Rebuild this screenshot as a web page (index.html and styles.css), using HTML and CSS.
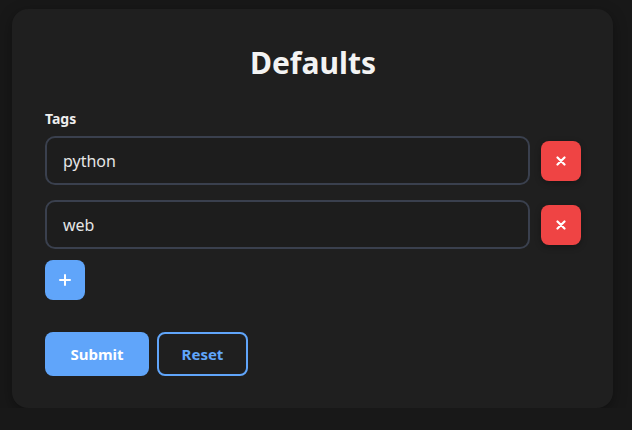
FILE: index.html
```html
<!DOCTYPE html>
<html>
<head>
<meta charset="utf-8">
<link rel="stylesheet" href="styles.css">
</head>
<body>
<div class="card">
  <h1 class="title">Defaults</h1>
  <div class="field-label">Tags</div>
  <div class="rows">
    <div class="row">
      <div class="input">python</div>
      <button class="del" aria-label="remove"><svg width="10" height="10" viewBox="0 0 10 10"><path d="M1.5 1.5 L8.5 8.5 M8.5 1.5 L1.5 8.5" stroke="#fff" stroke-width="2.2" stroke-linecap="round"/></svg></button>
    </div>
    <div class="row">
      <div class="input">web</div>
      <button class="del" aria-label="remove"><svg width="10" height="10" viewBox="0 0 10 10"><path d="M1.5 1.5 L8.5 8.5 M8.5 1.5 L1.5 8.5" stroke="#fff" stroke-width="2.2" stroke-linecap="round"/></svg></button>
    </div>
  </div>
  <button class="add" aria-label="add"><svg width="12" height="12" viewBox="0 0 12 12"><path d="M6 1 V11 M1 6 H11" stroke="#fff" stroke-width="2" stroke-linecap="round"/></svg></button>
  <div class="actions">
    <button class="btn primary">Submit</button>
    <button class="btn outline">Reset</button>
  </div>
</div>
</body>
</html>
```
FILE: styles.css
```css
html, body {
  margin: 0;
  padding: 0;
  background: #181818;
}
body {
  padding: 9px 19px 0 12px;
  font-family: "Segoe UI", "Noto Sans", sans-serif;
  color: #f0f0f0;
}
.card {
  width: 536px;
  background: #1f1f1f;
  border-radius: 16px;
  padding: 32px 32px 32px 33px;
  box-shadow: 0 4px 14px rgba(0,0,0,0.35);
}
.title {
  margin: 4px 0 0 0;
  text-align: center;
  font-size: 30px;
  line-height: 36px;
  font-weight: 700;
  color: #f3f3f3;
}
.field-label {
  margin-top: 28px;
  font-size: 14px;
  line-height: 20px;
  font-weight: 700;
  color: #eeeeee;
}
.rows {
  margin-top: 7px;
  display: flex;
  flex-direction: column;
  gap: 15px;
}
.row {
  display: flex;
  align-items: center;
  gap: 11px;
}
.input {
  flex: 1;
  box-sizing: border-box;
  height: 49px;
  border: 2px solid #3a404e;
  border-radius: 10px;
  padding: 0 16px;
  display: flex;
  align-items: center;
  font-size: 16px;
  color: #e6e6e6;
  background: #1d1d1d;
}
.del {
  width: 40px;
  height: 40px;
  border: none;
  border-radius: 8px;
  background: #ef4444;
  display: flex;
  align-items: center;
  justify-content: center;
  padding: 0;
  box-shadow: 0 2px 6px rgba(0,0,0,0.3);
}
.add {
  margin-top: 11px;
  width: 40px;
  height: 40px;
  border: none;
  border-radius: 8px;
  background: #60a5fa;
  display: flex;
  align-items: center;
  justify-content: center;
  padding: 0;
}
.actions {
  margin-top: 32px;
  display: flex;
  gap: 8px;
}
.btn {
  box-sizing: border-box;
  height: 44px;
  border-radius: 8px;
  font-family: "Segoe UI", "Noto Sans", sans-serif;
  font-size: 15px;
  font-weight: 700;
  padding: 0;
}
.primary {
  width: 104px;
  background: #60a5fa;
  color: #ffffff;
  border: none;
}
.outline {
  width: 91px;
  background: transparent;
  color: #60a5fa;
  border: 2px solid #60a5fa;
}
```
